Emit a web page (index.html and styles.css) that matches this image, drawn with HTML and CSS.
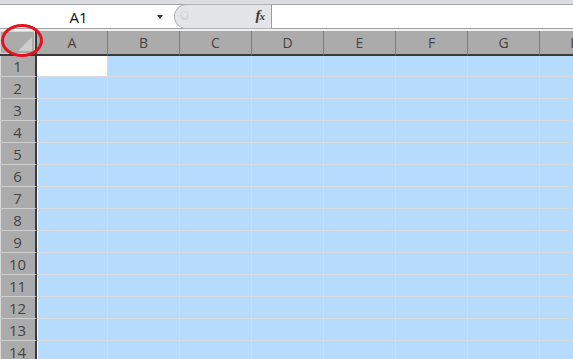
FILE: index.html
```html
<!DOCTYPE html>
<html lang="en">
<head>
    <meta charset="UTF-8">
    <title>Sheet</title>
    <link rel="stylesheet" href="styles.css">
</head>
<body>
<div class="window">
    <div class="top-strip"></div>
    <div class="formula-row">
        <div class="name-box">
            <span class="cell-ref">A1</span>
            <span class="drop"></span>
        </div>
        <div class="fx-box">
            <span class="knob"></span>
            <span class="fx"><i>f</i><i class="sub">x</i></span>
        </div>
        <div class="formula-input"></div>
    </div>
    <div class="gap"></div>

    <div class="sheet" id="sheet">
        <div class="corner"><span class="tri"></span></div>
        <div class="col-head">A</div>
        <div class="col-head">B</div>
        <div class="col-head">C</div>
        <div class="col-head">D</div>
        <div class="col-head">E</div>
        <div class="col-head">F</div>
        <div class="col-head">G</div>
        <div class="col-head">H</div>
    </div>

    <div class="select-mark"></div>
</div>

<script>
    // fill the rows, all cells selected except the active A1
    var sheet = document.getElementById('sheet');
    for (var r = 1; r <= 14; r++) {
        var head = document.createElement('div');
        head.className = 'row-head';
        head.textContent = r;
        sheet.appendChild(head);
        for (var c = 0; c < 8; c++) {
            var cell = document.createElement('div');
            cell.className = 'cell' + (c === 0 ? ' first' : '') + (r === 1 && c === 0 ? ' active' : '');
            sheet.appendChild(cell);
        }
    }
</script>
</body>
</html>
```

FILE: styles.css
```css
body, html {
    margin: 0;
    height: 100%;
    background: #fff;
    font-family: "Open Sans", "Noto Sans", sans-serif;
}
.window {
    position: relative;
    width: 573px;
    height: 359px;
    overflow: hidden;
}
.top-strip {
    height: 4px;
    background: #dcdddf;
    border-bottom: 1px solid #a4a5a7;
}
.formula-row {
    display: flex;
    height: 23px;
    border-bottom: 1px solid #a0a0a0;
    background: #fff;
}
.name-box {
    display: flex;
    align-items: center;
    width: 174px;
}
.cell-ref {
    width: 157px;
    text-align: center;
    font-size: 15px;
    color: #111;
}
.drop {
    width: 0;
    height: 0;
    border-left: 3px solid transparent;
    border-right: 3px solid transparent;
    border-top: 4px solid #333;
    margin-top: 1px;
}
.fx-box {
    display: flex;
    align-items: center;
    justify-content: space-between;
    width: 85px;
    height: 23px;
    margin-top: -1px;
    padding: 0 6px 0 5px;
    background: #e4e5e6;
    border: 1px solid #b3b3b3;
    border-radius: 13px 0 0 13px;
    border-right-color: #9c9c9c;
}
.knob {
    width: 9px;
    height: 9px;
    border-radius: 50%;
    background: radial-gradient(circle at 50% 40%, #eeeeee, #c4c4c4);
    margin-top: -2px;
}
.fx {
    font-family: "Liberation Serif", serif;
    font-size: 15px;
    font-weight: bold;
    color: #3a3a3a;
    margin-bottom: 2px;
}
.fx .sub {
    font-size: 11px;
    margin-left: -1px;
}
.formula-input {
    flex: 1;
    background: #fff;
}
.gap {
    height: 2px;
    background: #f0f0f0;
}
.sheet {
    display: grid;
    grid-template-columns: 37px 71px repeat(7, 72px);
    grid-template-rows: 25px 21px repeat(13, 22px);
}
.corner {
    position: relative;
    background: #ababab;
    border-right: 2px solid #3a3a3a;
    border-bottom: 2px solid #3a3a3a;
    box-shadow: inset 1px 1px 0 #d4d4d4, inset -1px -1px 0 #d4d4d4;
}
.tri {
    position: absolute;
    right: 3px;
    bottom: 3px;
    width: 0;
    height: 0;
    border-left: 14px solid transparent;
    border-bottom: 14px solid #cdcdcd;
}
.col-head {
    display: flex;
    align-items: center;
    justify-content: center;
    background: #ababab;
    border-right: 1px solid #7d7d7d;
    border-bottom: 2px solid #3a3a3a;
    font-size: 14px;
    color: #444;
}
.row-head {
    display: flex;
    align-items: center;
    justify-content: center;
    background: #ababab;
    border-right: 2px solid #3a3a3a;
    border-bottom: 1px solid #cfcfcf;
    box-shadow: inset 1px 0 0 #d8d8d8;
    font-size: 15px;
    color: #444;
}
.cell {
    background: #b7dbfd;
    border-right: 1px solid #d8dce0;
    border-bottom: 1px solid #d8dce0;
}
.cell.first {
    box-shadow: inset 1px 0 0 #fff;
}
.cell.active {
    background: #fff;
}
.select-mark {
    position: absolute;
    left: 1px;
    top: 24px;
    width: 36px;
    height: 27px;
    border: 3px solid #e3131c;
    border-radius: 50%;
}
```
